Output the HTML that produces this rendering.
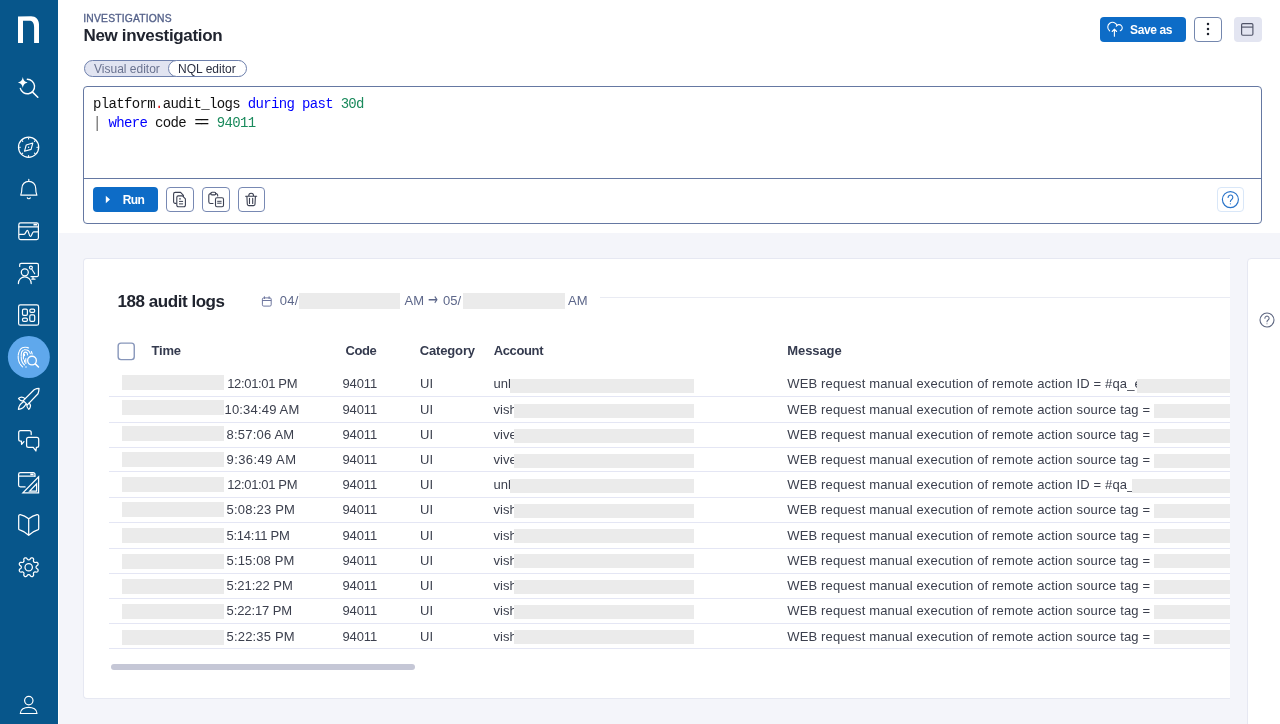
<!DOCTYPE html>
<html lang="en">
<head>
<meta charset="utf-8">
<title>New investigation</title>
<style>
*{box-sizing:border-box;margin:0;padding:0}
html,body{width:1280px;height:724px;overflow:hidden}
body{position:relative;background:#f4f5fa;font-family:"Liberation Sans",sans-serif;color:#2b3042}
.abs{position:absolute}
#wrap{position:absolute;left:0;top:0;width:1280px;height:724px;overflow:hidden;background:#f4f5fa;transform:translateZ(0);will-change:transform}
#side{position:absolute;left:0;top:0;width:58px;height:724px;background:#07568b}
#side svg{position:absolute;left:0;top:0;overflow:visible}
#top{position:absolute;left:58px;top:0;width:1222px;height:233px;background:#fff}
.crumb{position:absolute;left:83.300px;top:13px;font-size:10.300px;line-height:12px;color:#56638b;letter-spacing:.2px;white-space:nowrap;-webkit-text-stroke:.35px #56638b}
.title{position:absolute;left:83.500px;top:25px;font-size:17px;line-height:22px;font-weight:700;color:#20242f;letter-spacing:-.34px;white-space:nowrap}
.pill{position:absolute;left:84px;top:60px;width:162px;height:17px;border:1px solid #6f81ad;border-radius:9px;background:#e1e4f1;font-size:12px;line-height:15px;white-space:nowrap}
.pill .a{position:absolute;left:9px;top:0;color:#6a7390;transform:translateY(.6px)}
.pill .b{position:absolute;left:83px;top:-1px;width:79px;height:17px;border:1px solid #6f81ad;border-radius:9px;background:#fff;color:#2b3042;text-align:center}
.pill .b b{font-weight:400;display:inline-block;transform:translate(-.6px,.6px)}
#ed{position:absolute;left:83px;top:86px;width:1179px;height:138px;border:1px solid #6578a2;border-radius:4px;background:#fff}
#ed .sep{position:absolute;left:0;top:91px;width:100%;height:1px;background:#6578a2}
.code{position:absolute;left:9px;font-family:"Liberation Mono","DejaVu Sans Mono",monospace;font-size:14px;letter-spacing:-.665px;line-height:18px;color:#111;white-space:pre}
.eq{display:inline-block;width:15.470px;letter-spacing:-2px;text-align:center;text-indent:-1px}
.pp{color:#666;display:inline-block;transform:translateY(-.5px) scaleY(1.15)}
.kw{color:#0000ff}.nm{color:#1a8a5c}.dl{color:#e02020}
.btn{position:absolute;border-radius:4px}
.run{left:93px;top:187px;width:65px;height:25px;background:#0d6cc7;color:#fff;font-size:12px;font-weight:700;line-height:25px}
.run span{position:absolute;left:29.700px;top:1px;letter-spacing:-.6px}
.ib{border:1px solid #7889b3;background:#fff;width:27px;height:25px;top:187px}
.ib svg,.btn svg{position:absolute;overflow:visible}
.save{left:1100px;top:17px;width:86px;height:25px;background:#0d6cc7;color:#fff;font-size:12px;font-weight:700;line-height:25px}
.save span{position:absolute;left:30px;top:0;white-space:nowrap;letter-spacing:-.37px;transform:translateY(.5px)}
#card{position:absolute;left:83px;top:258px;width:1147px;height:441px;background:#fff;border:1px solid #e6e8f2;border-right:none;border-radius:4px 0 0 4px;overflow:hidden}
#rp{position:absolute;left:1247px;top:258px;width:40px;height:480px;background:#fff;border:1px solid #e6e8f2;border-radius:4px}
.h2{position:absolute;left:34.500px;top:32px;transform:translateY(.5px);font-size:17px;line-height:22px;font-weight:700;color:#20242f;letter-spacing:-.45px;white-space:nowrap}
.dt{position:absolute;top:35px;font-size:13px;line-height:15px;color:#5d678a;white-space:nowrap}
.arr{font-family:"DejaVu Sans",sans-serif;font-size:17px;transform-origin:0 50%;transform:translateY(-.8px) scaleX(.7)}
.rd{position:absolute;background:#ebebeb;display:block}
.th{position:absolute;top:85px;font-size:13px;line-height:16px;font-weight:700;color:#343a4e;white-space:nowrap}
#ci{position:absolute;left:-1px;top:-1px;width:1200px;height:460px}
.c{position:absolute;font-size:13px;line-height:16px;color:#3c404e;white-space:nowrap;transform:translateY(.4px)}
.c.t{letter-spacing:-.34px}.c.n{letter-spacing:-.1px}.c.m{letter-spacing:.145px}
.ln{position:absolute;display:block;left:26px;width:1130px;height:1px;background:#e4e6f4}
</style>
</head>
<body>
<div id="wrap">
<div id="top"></div>
<div class="abs" style="left:58px;top:0;width:1px;height:724px;background:#fff"></div>

<div id="side">
<svg id="sv" width="58" height="724" viewBox="0 0 58 724" fill="none" stroke="#fff" stroke-width="1.2" stroke-linecap="round" stroke-linejoin="round">
<path d="M18 43V16.6L31 16.2C35.8 16.2 39 19.6 39 24.6V43H34.1V27.2C34.1 22.6 32.2 20.7 29.2 20.7L23 20.8V43Z" fill="#fff" stroke="none"/>
<path d="M27.3 79.3A7.25 7.25 0 1 1 20.3 88.4" stroke-width="1.4"/><path d="M32.6 92.1L37.8 97.3" stroke-width="1.5"/>
<path d="M22.8 77C23.6 80.4 24.5 81.500 27.600 82.500 24.500 83.500 23.600 84.600 22.800 88 22 84.600 21.100 83.500 18 82.500 21.100 81.500 22 80.400 22.800 77Z" fill="#fff" stroke="none"/>
<circle cx="28.6" cy="147.2" r="10.1" stroke-width="1.25"/>
<path d="M32.8 143L31.100 149.400 24.500 151.300 26.200 145Z" stroke-width="1.1"/><circle cx="28.6" cy="147.200" r=".7" fill="#fff" stroke="none"/>
<path d="M37.80 147.20L36.90 147.20M35.11 153.71L34.47 153.07M28.60 156.40L28.60 155.50M22.09 153.71L22.73 153.07M19.40 147.20L20.30 147.20M22.09 140.69L22.73 141.33M28.60 138.00L28.60 138.90M35.11 140.69L34.47 141.33" stroke-width="1.1"/>
<path d="M28.8 179.300V180.900M20.700 195.100C21.800 192.500 21.900 190.500 21.900 188.300 21.900 184.100 24.900 181.300 28.800 181.300 32.700 181.300 35.700 184.100 35.700 188.300 35.700 190.500 35.800 192.500 36.900 195.100ZM27.300 197.800C27.700 199 29.900 199 30.300 197.800" stroke-width="1.15"/>
<rect x="18.8" y="222.900" width="19.600" height="16.700" rx="1.800"/><path d="M18.800 226.900H38.400M19.500 234.400H24C25.500 234.400 26.300 230.300 27.400 230.300 28.700 230.300 29 236.500 30.400 236.500 31.700 236.500 32.200 231.800 33.600 231.800H37.700" stroke-width="1.2"/><rect x="33.5" y="223.700" width="3.500" height="1.800" fill="#fff" stroke="none"/>
<path d="M19.700 266.500V264.800A1.400 1.400 0 0 1 21.100 263.400H37A1.400 1.400 0 0 1 38.400 264.800V275.200A1.400 1.400 0 0 1 37 276.600H31M33 277V279M31.800 279.200H35" stroke-width="1.2"/><circle cx="24.800" cy="272.300" r="3.500" stroke-width="1.25"/><path d="M18.400 283.600C18.400 274.700 31.200 274.700 31.200 283.600" stroke-width="1.25"/><circle cx="30.900" cy="267.600" r="1.500" stroke-width="1.100"/><path d="M31.700 269L34.700 273.700" stroke-width="1.100"/>
<rect x="18.600" y="304.900" width="20" height="20.300" rx="1.800"/><rect x="22.500" y="309.100" width="4.900" height="6.300" rx="1.300" stroke-width="1.2"/><rect x="29.800" y="309.100" width="4.900" height="3.200" rx="1.300" stroke-width="1.2"/><rect x="22.500" y="318.100" width="4.900" height="3.200" rx="1.300" stroke-width="1.2"/><rect x="29.800" y="314.900" width="4.900" height="6.400" rx="1.300" stroke-width="1.2"/>
<circle cx="28.850" cy="357" r="21" fill="#5fa8ec" stroke="none"/>
<g stroke-width="1.100"><path d="M22.600 366.800C19.800 364.500 18.200 361 18.200 356.800 18.200 351 21 347.200 25 347.200 26.400 347.200 27.600 347.500 28.600 348" stroke-dasharray="3.400 .9"/><path d="M24.500 365C22.200 363 21.200 360.500 21.200 357V354.500C21.200 351.500 22.900 349.700 25.300 349.700 27.800 349.700 29.600 351.300 30.300 353.700" stroke-dasharray="9 1.2 6 1.2"/><path d="M23.400 359V355.300C23.400 353.200 24.200 352.100 25.400 352.100 26.700 352.100 27.500 353.200 27.600 355"/><path d="M24.500 354.300V355.800M24.500 360V362M25.800 358.500V363.500" /><path d="M31.400 351.500L32.200 354"/><circle cx="26.000" cy="366.900" r=".75" fill="#fff" stroke="none"/></g>
<circle cx="32" cy="360.600" r="4.350" fill="#5fa8ec" stroke-width="1.300"/><path d="M35.300 363.900L38.500 367" stroke-width="1.500"/>
<path d="M39 388.400C37.400 388.500 35.800 388.900 34.400 389.500L23.200 400.600 27.400 404.900 38 393.800C38.700 392 39 390 39 388.400Z" stroke-width="1.250"/><path d="M25.200 398.700C22.500 396.500 19.800 397.200 18.500 398.500 19.500 400 21.500 401.100 23.600 401.100M29.200 403C31.400 405.500 30.300 408.200 28.700 409.400 27.400 408.300 26.600 406.600 26.800 404.400M23.300 402C21 403.200 18.800 406.500 18.400 409.300 21.200 409.100 24.300 407.100 25.700 404.500" stroke-width="1.200"/>
<path d="M31.200 434.500V432.600A1.900 1.900 0 0 0 29.300 430.700H20.600A1.900 1.900 0 0 0 18.700 432.600V439.200A1.900 1.900 0 0 0 20.600 441.100H21.400L21.600 444.300 23.900 441.600" stroke-width="1.250"/><path d="M28.500 437.400H36.800A1.900 1.900 0 0 1 38.700 439.300V445.400A1.900 1.900 0 0 1 36.800 447.300H36.400L35.900 451 33.300 447.300H28.500A1.900 1.900 0 0 1 26.600 445.400V439.300A1.900 1.900 0 0 1 28.500 437.400Z" stroke-width="1.250"/>
<path d="M25.100 486.900H20.400A1.800 1.800 0 0 1 18.600 485.100V474.400A1.800 1.800 0 0 1 20.400 472.600H33.200A1.800 1.800 0 0 1 35 474.400V476.400M18.600 476.200H35" stroke-width="1.250"/><rect x="30.300" y="473.500" width="3.300" height="1.700" fill="#fff" stroke="none"/><path d="M38.600 476.800V492.900H22.900ZM36.600 483.800V491H29.700Z" stroke-width="1.250" stroke-linejoin="miter"/>
<path d="M28.700 518.800C26 516.600 23 515.200 20.300 514.700 19.400 514.600 18.700 515.200 18.700 516V528.700C18.700 529.300 19.100 529.800 19.700 529.900 22.800 530.700 25.800 532.500 28.700 535.300 31.600 532.500 34.600 530.700 37.700 529.900 38.300 529.800 38.700 529.300 38.700 528.700V516C38.700 515.200 38 514.600 37.100 514.700 34.400 515.200 31.400 516.600 28.700 518.800ZM28.700 518.800V535.300" stroke-width="1.250"/>
<path d="M36.05 567.20 L36.11 567.59 L36.28 568.00 L36.59 568.45 L37.59 569.09 L37.99 569.69 L38.12 570.26 L38.07 570.80 L37.87 571.28 L37.52 571.70 L37.03 572.01 L36.32 572.15 L35.17 571.90 L34.62 571.99 L34.21 572.16 L33.90 572.40 L33.66 572.71 L33.49 573.12 L33.40 573.67 L33.65 574.82 L33.51 575.53 L33.20 576.02 L32.78 576.37 L32.30 576.57 L31.76 576.62 L31.19 576.49 L30.59 576.09 L29.95 575.09 L29.50 574.78 L29.09 574.61 L28.70 574.55 L28.31 574.61 L27.90 574.78 L27.45 575.09 L26.81 576.09 L26.21 576.49 L25.64 576.62 L25.10 576.57 L24.62 576.37 L24.20 576.02 L23.89 575.53 L23.75 574.82 L24.00 573.67 L23.91 573.12 L23.74 572.71 L23.50 572.40 L23.19 572.16 L22.78 571.99 L22.23 571.90 L21.08 572.15 L20.37 572.01 L19.88 571.70 L19.53 571.28 L19.33 570.80 L19.28 570.26 L19.41 569.69 L19.81 569.09 L20.81 568.45 L21.12 568.00 L21.29 567.59 L21.35 567.20 L21.29 566.81 L21.12 566.40 L20.81 565.95 L19.81 565.31 L19.41 564.71 L19.28 564.14 L19.33 563.60 L19.53 563.12 L19.88 562.70 L20.37 562.39 L21.08 562.25 L22.23 562.50 L22.78 562.41 L23.19 562.24 L23.50 562.00 L23.74 561.69 L23.91 561.28 L24.00 560.73 L23.75 559.58 L23.89 558.87 L24.20 558.38 L24.62 558.03 L25.10 557.83 L25.64 557.78 L26.21 557.91 L26.81 558.31 L27.45 559.31 L27.90 559.62 L28.31 559.79 L28.70 559.85 L29.09 559.79 L29.50 559.62 L29.95 559.31 L30.59 558.31 L31.19 557.91 L31.76 557.78 L32.30 557.83 L32.78 558.03 L33.20 558.38 L33.51 558.87 L33.65 559.58 L33.40 560.73 L33.49 561.28 L33.66 561.69 L33.90 562.00 L34.21 562.24 L34.62 562.41 L35.17 562.50 L36.32 562.25 L37.03 562.39 L37.52 562.70 L37.87 563.12 L38.07 563.60 L38.12 564.14 L37.99 564.71 L37.59 565.31 L36.59 565.95 L36.28 566.40 L36.11 566.81Z" stroke-width="1.250"/><circle cx="28.700" cy="567.200" r="3.700" stroke-width="1.250"/>
<circle cx="28.800" cy="700.600" r="4.200"/><path d="M20.300 713.500C20.300 705.200 37 705.200 37 713.500Z"/>
</svg>
</div>

<div class="crumb">INVESTIGATIONS</div>
<div class="title">New investigation</div>

<div class="pill"><span class="a">Visual editor</span><span class="b"><b>NQL editor</b></span></div>

<div class="btn save"><svg style="left:0;top:0" width="86" height="25" viewBox="1100 17 86 25" fill="none" stroke="#fff" stroke-width="1.100" stroke-linecap="round" stroke-linejoin="round"><path d="M1109.600 30.800A4.750 4.750 0 1 1 1117 25.500"/><path d="M1116.300 26.200A3.200 3.200 0 1 1 1120.300 30.800"/><path d="M1114.400 36.300V29.300M1112.200 31.500L1114.400 29.200 1116.600 31.500"/></svg><span>Save as</span></div>
<div class="btn ib" style="left:1194px;top:17px;width:28px;border-color:#7487ae"><svg style="left:11.100px;top:4.300px" width="4" height="15" viewBox="0 0 4 15" fill="#20242f"><circle cx="2" cy="2" r="1.250"/><circle cx="2" cy="7.100" r="1.250"/><circle cx="2" cy="12.100" r="1.250"/></svg></div>
<div class="btn" style="left:1234px;top:17px;width:28px;height:25px;background:#e3e5f1"><svg style="left:7.100px;top:6.100px" width="13" height="13" viewBox="0 0 13 13" fill="none" stroke="#505468" stroke-width="1.150" stroke-linejoin="round"><rect x=".6" y=".6" width="11.300" height="11.600" rx="1.200"/><path d="M.6 4.100H11.900"/></svg></div>

<div id="ed">
  <div class="code" style="top:7px;transform:translateY(.5px)"><span>platform</span><span class="dl">.</span><span>audit_logs </span><span class="kw">during past</span> <span class="nm">30d</span></div>
  <div class="code" style="top:27px;transform:translateY(.4px)"><span class="pp">|</span> <span class="kw">where</span><span> code </span><span class="eq">==</span> <span class="nm">94011</span></div>
  <div class="sep"></div>
</div>
<div class="btn run"><svg style="left:12px;top:8px" width="6" height="9" viewBox="0 0 6 9"><path d="M.8.800L5 4.500.8 8.200Z" fill="#fff"/></svg><span>Run</span></div>
<div class="btn ib" style="left:166px;width:28px"><svg style="left:-1px;top:-1px" width="28" height="25" viewBox="166 187 28 25" fill="none" stroke="#3b4052" stroke-width="1.100" stroke-linejoin="round" stroke-linecap="round"><path d="M176.300 203.400H175.200A1.600 1.600 0 0 1 173.600 201.800V194A1.600 1.600 0 0 1 175.200 192.400H180.600L183.400 195.300V196.500"/><path d="M178.300 195.900H182.500L185.400 198.900V205.200A1.500 1.500 0 0 1 183.900 206.700H178.300A1.500 1.500 0 0 1 176.800 205.200V197.400A1.500 1.500 0 0 1 178.300 195.900Z" fill="#fff"/><path d="M179.400 198.900H180.600M179.400 201.400H182.700M179.400 203.900H182.700" stroke-width="1"/></svg></div>
<div class="btn ib" style="left:202px;width:28px"><svg style="left:-1px;top:-1px" width="28" height="25" viewBox="202 187 28 25" fill="none" stroke="#3b4052" stroke-width="1.100" stroke-linejoin="round" stroke-linecap="round"><path d="M213 203.500H210.600A1.800 1.800 0 0 1 208.800 201.700V195.400A1.800 1.800 0 0 1 210.600 193.600H210.900M215.700 193.600H215.900A1.800 1.800 0 0 1 217.700 195.400V196"/><rect x="210.800" y="192.300" width="5" height="2.600" rx="1.200"/><rect x="215.500" y="197.700" width="8" height="9.100" rx="1.500" fill="#fff"/><path d="M217.600 201.300H221.200M217.600 203.200H221.200" stroke-width="1"/></svg></div>
<div class="btn ib" style="left:238px"><svg style="left:-1px;top:-1px" width="27" height="25" viewBox="238 187 27 25" fill="none" stroke="#3b4052" stroke-width="1.100" stroke-linejoin="round" stroke-linecap="round"><path d="M245.600 196.300H256.700M248.700 196.200C248.700 194.300 249.800 193.300 251.150 193.300 252.500 193.300 253.600 194.300 253.600 196.200M246.900 196.400L247.300 204.300A1.400 1.400 0 0 0 248.700 205.600H253.600A1.400 1.400 0 0 0 255 204.300L255.400 196.400M249.500 198.200V203.400M252.700 198.200V203.400"/></svg></div>
<div class="btn" style="left:1217px;top:187px;width:27px;height:25px;border:1px solid #d9e7f8;background:#fff"><svg style="left:-1px;top:-1px" width="27" height="25" viewBox="1217 187 27 25" fill="none" stroke="#2a74c9" stroke-width="1.150" stroke-linecap="round"><circle cx="1230.400" cy="199.600" r="8"/><path d="M1228.100 197.400a2.350 2.350 0 1 1 3.600 2c-.9.600-1.300 1.100-1.300 2.100"/><circle cx="1230.400" cy="203.800" r=".65" fill="#2a74c9" stroke="none"/></svg></div>

<div id="card"><div id="ci">
  <div class="h2">188 audit logs</div>
  <svg class="abs" style="left:0;top:0;overflow:visible" width="200" height="60" viewBox="83 258 200 60" fill="none" stroke="#66709a" stroke-width=".95"><rect x="262.400" y="297.900" width="8.800" height="8.200" rx="1.300"/><path d="M262.400 300.500H271.200M264.400 296.300V299M269.100 296.300V299"/></svg>
  <div class="dt" style="left:196.700px;letter-spacing:.3px">04/</div>
  <i class="rd" style="left:216px;top:35px;width:101px;height:15.500px"></i>
  <div class="dt" style="left:321.500px">AM</div><div class="dt arr" style="left:345px">→</div><div class="dt" style="left:360px">05/</div>
  <i class="rd" style="left:380px;top:35px;width:101.500px;height:15.500px"></i>
  <div class="dt" style="left:485px">AM</div>
  <div class="abs" style="left:517px;top:39px;width:640px;height:1px;background:#e9ebf3"></div>

  <svg class="abs" style="left:0;top:0;overflow:visible" width="60" height="110" viewBox="83 258 60 110" fill="#fff" stroke="#8796ba" stroke-width="1.400"><rect x="118.150" y="343.150" width="16.100" height="16.500" rx="2.800"/></svg>
  <div class="th" style="left:68.600px;letter-spacing:-.2px">Time</div>
  <div class="th" style="left:262.500px;letter-spacing:-.44px">Code</div>
  <div class="th" style="left:336.700px;letter-spacing:-.14px">Category</div>
  <div class="th" style="left:410.700px;letter-spacing:-.37px">Account</div>
  <div class="th" style="left:704.300px;letter-spacing:-.1px">Message</div>

<i class="rd" style="left:39px;top:117px;width:101.5px;height:15px"></i><span class="c" style="left:144.2px;top:118px;letter-spacing:-0.34px">12:01:01 PM</span><span class="c n" style="left:259.4px;top:118px">94011</span><span class="c" style="left:337.1px;top:118px">UI</span><span class="c" style="left:410.6px;top:118px">unl</span><i class="rd" style="left:427px;top:121px;width:184.4px;height:14px"></i><span class="c m" style="left:704.3px;top:118px">WEB request manual execution of remote action ID = #qa_e</span><i class="rd" style="left:1054px;top:121px;width:93px;height:14px"></i><i class="ln" style="top:138px"></i>
<i class="rd" style="left:39px;top:142px;width:101.5px;height:15px"></i><span class="c" style="left:141.5px;top:144px;letter-spacing:0.18px">10:34:49 AM</span><span class="c n" style="left:259.4px;top:144px">94011</span><span class="c" style="left:337.1px;top:144px">UI</span><span class="c" style="left:410.6px;top:144px">vish</span><i class="rd" style="left:431px;top:146px;width:180.4px;height:14px"></i><span class="c m" style="left:704.3px;top:144px">WEB request manual execution of remote action source tag =</span><i class="rd" style="left:1070.5px;top:146px;width:76.5px;height:14px"></i><i class="ln" style="top:164px"></i>
<i class="rd" style="left:39px;top:168px;width:101.5px;height:15px"></i><span class="c" style="left:143.5px;top:169px;letter-spacing:0.21px">8:57:06 AM</span><span class="c n" style="left:259.4px;top:169px">94011</span><span class="c" style="left:337.1px;top:169px">UI</span><span class="c" style="left:410.6px;top:169px">vive</span><i class="rd" style="left:431px;top:171px;width:180.4px;height:14px"></i><span class="c m" style="left:704.3px;top:169px">WEB request manual execution of remote action source tag =</span><i class="rd" style="left:1070.5px;top:171px;width:76.5px;height:14px"></i><i class="ln" style="top:189px"></i>
<i class="rd" style="left:39px;top:194px;width:101.5px;height:15px"></i><span class="c" style="left:143.5px;top:194px;letter-spacing:0.41px">9:36:49 AM</span><span class="c n" style="left:259.4px;top:194px">94011</span><span class="c" style="left:337.1px;top:194px">UI</span><span class="c" style="left:410.6px;top:194px">vive</span><i class="rd" style="left:431px;top:196px;width:180.4px;height:14px"></i><span class="c m" style="left:704.3px;top:194px">WEB request manual execution of remote action source tag =</span><i class="rd" style="left:1070.5px;top:196px;width:76.5px;height:14px"></i><i class="ln" style="top:213px"></i>
<i class="rd" style="left:39px;top:219px;width:101.5px;height:15px"></i><span class="c" style="left:144.2px;top:219px;letter-spacing:-0.34px">12:01:01 PM</span><span class="c n" style="left:259.4px;top:219px">94011</span><span class="c" style="left:337.1px;top:219px">UI</span><span class="c" style="left:410.6px;top:219px">unl</span><i class="rd" style="left:427px;top:221px;width:184.4px;height:14px"></i><span class="c m" style="left:704.3px;top:219px">WEB request manual execution of remote action ID = #qa_</span><i class="rd" style="left:1049px;top:221px;width:98px;height:14px"></i><i class="ln" style="top:239px"></i>
<i class="rd" style="left:39px;top:244px;width:101.5px;height:15px"></i><span class="c" style="left:143.5px;top:244px;letter-spacing:0.21px">5:08:23 PM</span><span class="c n" style="left:259.4px;top:244px">94011</span><span class="c" style="left:337.1px;top:244px">UI</span><span class="c" style="left:410.6px;top:244px">vish</span><i class="rd" style="left:431px;top:246px;width:180.4px;height:14px"></i><span class="c m" style="left:704.3px;top:244px">WEB request manual execution of remote action source tag =</span><i class="rd" style="left:1070.5px;top:246px;width:76.5px;height:14px"></i><i class="ln" style="top:264px"></i>
<i class="rd" style="left:39px;top:270px;width:101.5px;height:15px"></i><span class="c" style="left:143.5px;top:270px;letter-spacing:-0.24px">5:14:11 PM</span><span class="c n" style="left:259.4px;top:270px">94011</span><span class="c" style="left:337.1px;top:270px">UI</span><span class="c" style="left:410.6px;top:270px">vish</span><i class="rd" style="left:431px;top:271px;width:180.4px;height:14px"></i><span class="c m" style="left:704.3px;top:270px">WEB request manual execution of remote action source tag =</span><i class="rd" style="left:1070.5px;top:271px;width:76.5px;height:14px"></i><i class="ln" style="top:290px"></i>
<i class="rd" style="left:39px;top:296px;width:101.5px;height:15px"></i><span class="c" style="left:143.5px;top:295px;letter-spacing:0.15px">5:15:08 PM</span><span class="c n" style="left:259.4px;top:295px">94011</span><span class="c" style="left:337.1px;top:295px">UI</span><span class="c" style="left:410.6px;top:295px">vish</span><i class="rd" style="left:431px;top:296px;width:180.4px;height:14px"></i><span class="c m" style="left:704.3px;top:295px">WEB request manual execution of remote action source tag =</span><i class="rd" style="left:1070.5px;top:296px;width:76.5px;height:14px"></i><i class="ln" style="top:315px"></i>
<i class="rd" style="left:39px;top:321px;width:101.5px;height:15px"></i><span class="c" style="left:143.5px;top:320px;letter-spacing:-0.02px">5:21:22 PM</span><span class="c n" style="left:259.4px;top:320px">94011</span><span class="c" style="left:337.1px;top:320px">UI</span><span class="c" style="left:410.6px;top:320px">vish</span><i class="rd" style="left:431px;top:322px;width:180.4px;height:14px"></i><span class="c m" style="left:704.3px;top:320px">WEB request manual execution of remote action source tag =</span><i class="rd" style="left:1070.5px;top:322px;width:76.5px;height:14px"></i><i class="ln" style="top:340px"></i>
<i class="rd" style="left:39px;top:346px;width:101.5px;height:15px"></i><span class="c" style="left:143.5px;top:345px;letter-spacing:-0.09px">5:22:17 PM</span><span class="c n" style="left:259.4px;top:345px">94011</span><span class="c" style="left:337.1px;top:345px">UI</span><span class="c" style="left:410.6px;top:345px">vish</span><i class="rd" style="left:431px;top:347px;width:180.4px;height:14px"></i><span class="c m" style="left:704.3px;top:345px">WEB request manual execution of remote action source tag =</span><i class="rd" style="left:1070.5px;top:347px;width:76.5px;height:14px"></i><i class="ln" style="top:365px"></i>
<i class="rd" style="left:39px;top:372px;width:101.5px;height:15px"></i><span class="c" style="left:143.5px;top:371px;letter-spacing:0.19px">5:22:35 PM</span><span class="c n" style="left:259.4px;top:371px">94011</span><span class="c" style="left:337.1px;top:371px">UI</span><span class="c" style="left:410.6px;top:371px">vish</span><i class="rd" style="left:431px;top:372px;width:180.4px;height:14px"></i><span class="c m" style="left:704.3px;top:371px">WEB request manual execution of remote action source tag =</span><i class="rd" style="left:1070.5px;top:372px;width:76.5px;height:14px"></i><i class="ln" style="top:390px"></i>

  <div class="abs" style="left:28px;top:406px;width:304px;height:6px;border-radius:3px;background:#c5c7d6"></div>
</div></div>

<div id="rp"><svg class="abs" style="left:11.300px;top:52.500px;overflow:visible" width="16" height="16" viewBox="0 0 16 16" fill="none" stroke="#5d6680" stroke-width="1.100" stroke-linecap="round"><circle cx="8" cy="8" r="7"/><path d="M5.900 6.200a2.100 2.100 0 1 1 3.200 1.800c-.8.500-1.100.9-1.100 1.700"/><circle cx="8" cy="11.800" r=".5" fill="#5d6680" stroke="none"/></svg></div>
</div>
</body>
</html>
